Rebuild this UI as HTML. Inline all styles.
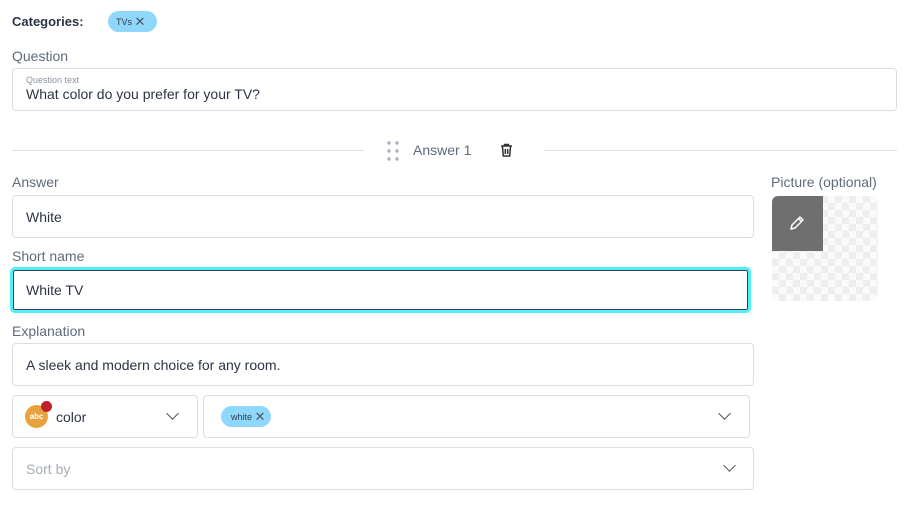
<!DOCTYPE html>
<html><head><style>
*{box-sizing:border-box;margin:0;padding:0}
body{width:911px;height:521px;background:#fff;font-family:"Liberation Sans",sans-serif;position:relative;overflow:hidden;color:#2f3b4c}
.a{position:absolute}
.lbl{position:absolute;font-size:14px;color:#5f6b7c}
.box{position:absolute;border:1px solid #d9dde6;border-radius:4px;background:#fff;font-size:14px;color:#2b3444;padding-left:13px;display:flex;align-items:center}
.chip{display:inline-flex;align-items:center;background:#8fd8fb;border-radius:11px;font-size:9px;color:#2f3b4c;height:21px;padding:0 8px}
.chev{position:absolute;width:9px;height:9px;border-right:1.6px solid #555;border-bottom:1.6px solid #555;transform:rotate(45deg)}
</style></head><body>
<div class="a" style="left:12px;top:14px;font-size:13px;font-weight:bold;color:#2b3444">Categories:</div>
<div class="a chip" style="left:108px;top:11px;width:49px">TVs&nbsp;<span style="font-size:13px;color:#4a5568">✕</span></div>
<div class="lbl" style="left:12px;top:48px">Question</div>
<div class="box" style="left:12px;top:68px;width:885px;height:43px;display:block;padding-top:6px">
<div style="font-size:9px;color:#8a94a3">Question text</div>
<div style="font-size:14px;margin-top:1px">What color do you prefer for your TV?</div></div>
<div class="a" style="left:12px;top:150px;width:352px;height:1px;background:#dde1e7"></div>
<div class="a" style="left:544px;top:150px;width:353px;height:1px;background:#dde1e7"></div>
<svg class="a" style="left:386px;top:140px" width="14" height="22"><g fill="#a8b0bc"><circle cx="3" cy="3" r="1.7"/><circle cx="11" cy="3" r="1.7"/><circle cx="3" cy="11" r="1.7"/><circle cx="11" cy="11" r="1.7"/><circle cx="3" cy="19" r="1.7"/><circle cx="11" cy="19" r="1.7"/></g></svg>
<div class="a" style="left:413px;top:142px;font-size:14px;color:#5f6b7c">Answer 1</div>
<svg class="a" style="left:500px;top:143px" width="13" height="14"><path d="M1 3h11M4.5 3V1.5h4V3M2.5 3.5l.8 9.5h6.4l.8-9.5M5.3 6v5M7.7 6v5" stroke="#333" stroke-width="1.5" fill="none"/></svg>
<div class="lbl" style="left:12px;top:174px">Answer</div>
<div class="box" style="left:12px;top:195px;width:742px;height:43px">White</div>
<div class="lbl" style="left:12px;top:248px">Short name</div>
<div class="box" style="left:10px;top:267px;width:741px;height:46px;border:3px solid #4ff0fa;box-shadow:inset 0 0 0 1px #333d4d;border-radius:5px;padding-left:13px">White TV</div>
<div class="lbl" style="left:12px;top:323px">Explanation</div>
<div class="box" style="left:12px;top:343px;width:742px;height:43px">A sleek and modern choice for any room.</div>
<div class="box" style="left:12px;top:395px;width:186px;height:43px;padding-left:12px">
<span style="position:relative;display:inline-block;width:23px;height:23px;border-radius:50%;background:#e9a23b;color:#fff;font-size:8px;font-weight:bold;text-align:center;line-height:23px;margin-right:8px">abc<span style="position:absolute;right:-4px;top:-4px;width:11px;height:11px;border-radius:50%;background:#c0202a"></span></span>color</div>
<div class="chev" style="left:168px;top:409px"></div>
<div class="box" style="left:203px;top:395px;width:547px;height:43px;padding-left:17px"><span class="chip" style="padding:0 6px 0 10px">white&nbsp;<span style="font-size:13px;color:#4a5568">✕</span></span></div>
<div class="chev" style="left:720px;top:409px"></div>
<div class="box" style="left:12px;top:447px;width:742px;height:43px;color:#a3abb7">Sort by</div>
<div class="chev" style="left:725px;top:461px"></div>
<div class="lbl" style="left:771px;top:174px">Picture (optional)</div>
<div class="a" style="left:772px;top:196px;width:106px;height:105px;border-radius:6px;overflow:hidden;background-color:#fafafa;background-image:linear-gradient(45deg,#eee 25%,transparent 25%,transparent 75%,#eee 75%),linear-gradient(45deg,#eee 25%,transparent 25%,transparent 75%,#eee 75%);background-size:14px 14px;background-position:0 0,7px 7px"><div style="width:51px;height:55px;background:#6f6f6f"></div></div>
<svg class="a" style="left:788px;top:214px" width="18" height="18"><path d="M3 15l1-4 8-8 3 3-8 8zM10.5 4.5l3 3" stroke="#fff" stroke-width="1.5" fill="none" stroke-linejoin="round"/></svg>
</body></html>
